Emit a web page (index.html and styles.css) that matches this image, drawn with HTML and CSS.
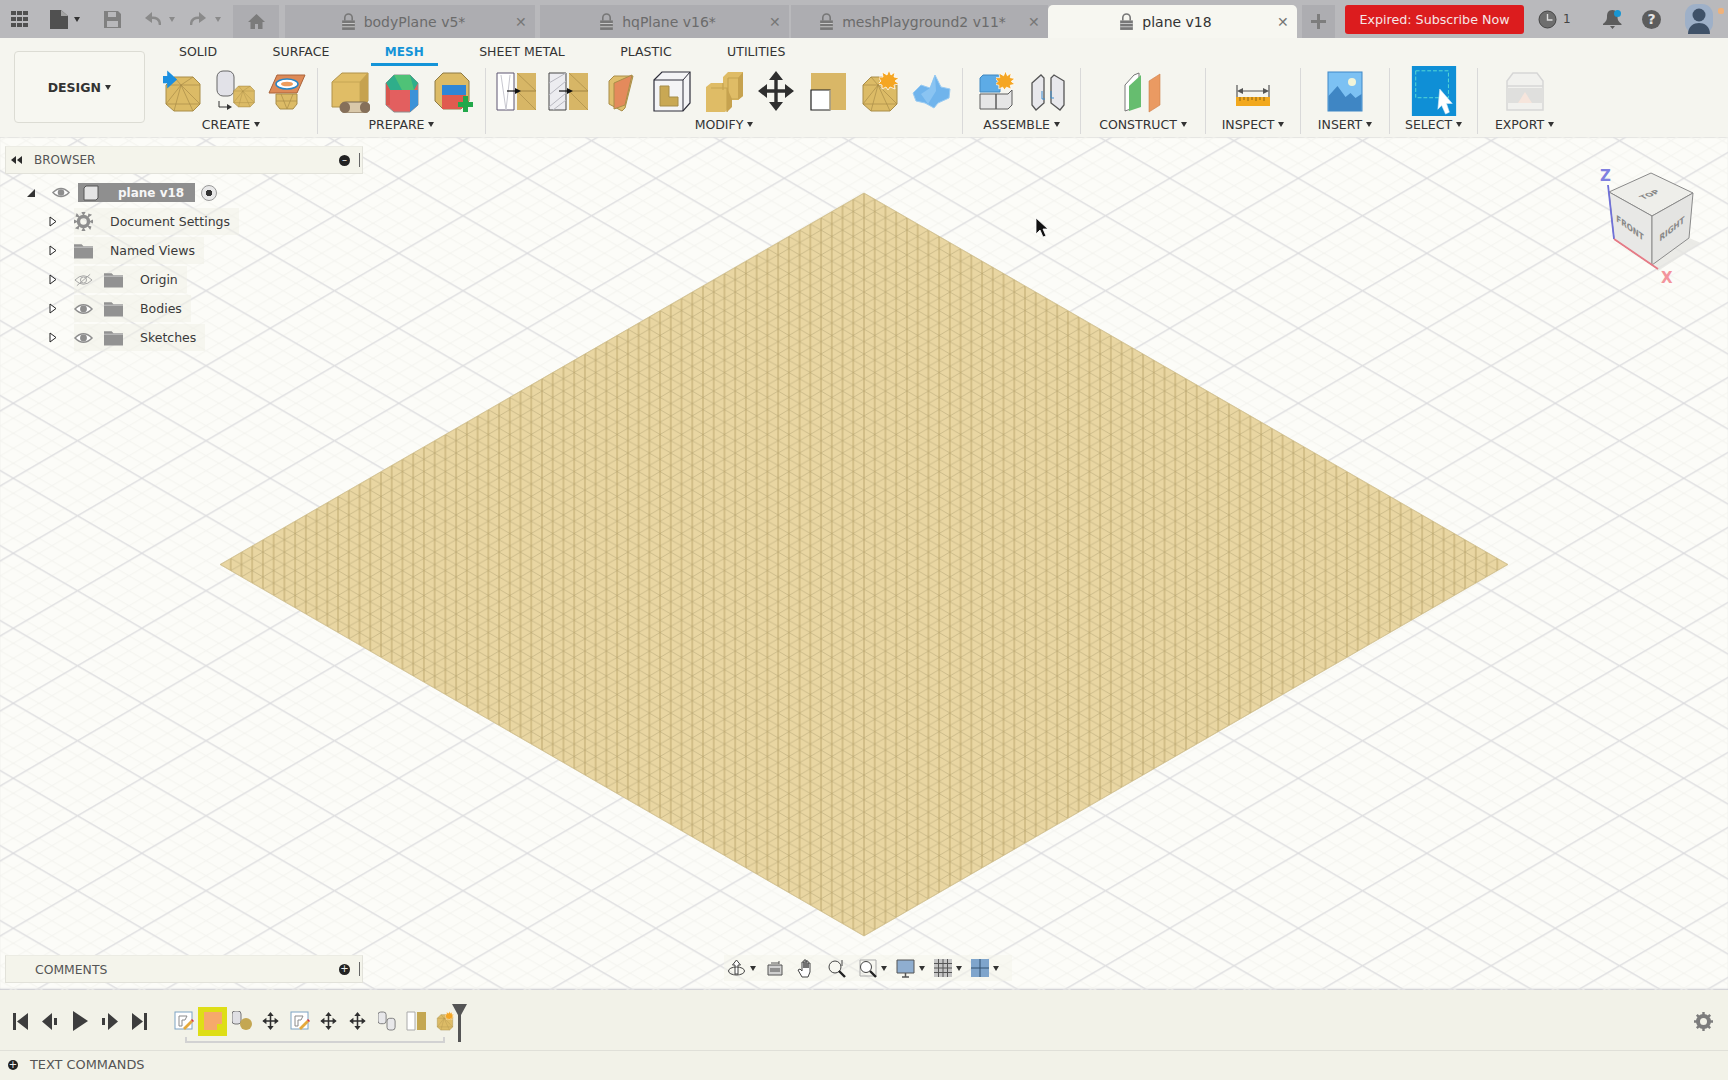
FILE: index.html
```html
<!DOCTYPE html>
<html lang="en">
<head>
  <meta charset="UTF-8" />
  <title>Autodesk Fusion 360 - plane v18</title>
  <link rel="stylesheet" href="styles.css">
</head>
<body>
  <!-- shared icon shapes -->
  <svg class="defs" width="0" height="0">
    <symbol id="hex" viewBox="0 0 40 44">
      <path d="M3 16l8-8h19l7 7v20l-7 7H11l-8-7z" fill="#dcbb66" stroke="#a98d48"/>
      <path d="M3 16h34M11 8l7 8 12-8M3 35l15-19 19 19M18 16l-7 26M18 16l12 26M3 35h34" fill="none" stroke="#a98d48" stroke-width=".7"/>
    </symbol>
    <symbol id="sun" viewBox="0 0 20 20">
      <path d="M10 0l2 5 4-3-1 5 5 1-4 3 4 3-5 1 1 4-5-2-2 3-2-3-4 2 0-4-4-1 3-3-3-4 5 0-1-5 5 3z" fill="#f5a623" stroke="#fff" stroke-width=".8"/>
    </symbol>
    <symbol id="move" viewBox="0 0 40 44">
      <path d="M20 7v30M5 22h30" stroke="#2f2f2f" stroke-width="3.4"/>
      <path d="M20 2l7 9H13zM20 42l-7-9h14zM2 22l9-7v14zM38 22l-9 7V15z" fill="#2f2f2f"/>
    </symbol>
    <symbol id="sketch" viewBox="0 0 20 20">
      <rect x="1" y="1" width="17" height="17" fill="#fff" stroke="#7da3c4"/>
      <path d="M5 5h8l-2 4H8v6H5z" fill="none" stroke="#8a8a8a"/>
      <path d="M9 17l8-8 2 2-8 8z" fill="#e5a93c"/><path d="M17 9l2 2 1-1-2-2z" fill="#d8333a"/>
    </symbol>
    <symbol id="eye" viewBox="0 0 20 14">
      <path d="M1 7q9-9 18 0q-9 9-18 0z" fill="#fff" stroke="#8e8e8e" stroke-width="1.6"/>
      <circle cx="10" cy="7" r="3.6" fill="#8e8e8e"/>
    </symbol>
    <symbol id="folder" viewBox="0 0 20 16">
      <path d="M0 1h8l2 2h10v13H0z" fill="#929292"/><path d="M0 4h20" stroke="#d8d8d8" stroke-width=".8"/>
    </symbol>
    <symbol id="lock" viewBox="0 0 14 17">
      <path d="M3.5 7V4.5a3.5 3.5 0 0 1 7 0V7" fill="none" stroke="#777" stroke-width="1.5"/>
      <path d="M1 7h12v9H1z" fill="#777"/><path d="M1 10h12M1 13h12" stroke="#c6c6c6"/>
    </symbol>
  </svg>

  <header class="titlebar">
    <div class="quick">
      <svg class="q-grid" width="17" height="16" viewBox="0 0 17 16" fill="#505050"><path d="M0 0h5v4H0zM6 0h5v4H6zM12 0h5v4h-5zM0 6h5v4H0zM6 6h5v4H6zM12 6h5v4h-5zM0 12h5v4H0zM6 12h5v4H6zM12 12h5v4h-5z"/></svg>
      <svg class="q-file" width="18" height="19" viewBox="0 0 18 19"><path d="M0 0h11l7 6v13H0z" fill="#505050"/><path d="M11 0v6h7" fill="#a4a4a4"/></svg>
      <span class="caret q-c1"></span>
      <svg class="q-save" width="17" height="17" viewBox="0 0 17 17"><path d="M0 0h14l3 3v14H0z" fill="#808080"/><path d="M4 1h8v5H4zM3 10h11v6H3z" fill="#b8b8bb"/></svg>
      <svg class="q-undo" width="16" height="14" viewBox="0 0 16 14"><path d="M15 13c0-6-4-8-10-7" fill="none" stroke="#8a8a8a" stroke-width="2.4"/><path d="M7 0v11L0 6z" fill="#8a8a8a"/></svg>
      <span class="caret caret-soft q-c2"></span>
      <svg class="q-redo" width="16" height="14" viewBox="0 0 16 14"><path d="M1 13c0-6 4-8 10-7" fill="none" stroke="#8a8a8a" stroke-width="2.4"/><path d="M9 0v11l7-5z" fill="#8a8a8a"/></svg>
      <span class="caret caret-soft q-c3"></span>
    </div>
    <div class="tab tab-home">
      <svg width="17" height="15" viewBox="0 0 17 15" fill="#7b7b7b"><path d="M8.5 0L17 8h-2.500v7H10v-5H7v5H2.500V8H0z"/></svg>
    </div>
    <div class="tab tab-1">
      <div class="tab-title"><svg width="15" height="18"><use href="#lock"/></svg><span>bodyPlane v5*</span></div>
      <span class="tab-close">✕</span>
    </div>
    <div class="tab tab-2">
      <div class="tab-title"><svg width="15" height="18"><use href="#lock"/></svg><span>hqPlane v16*</span></div>
      <span class="tab-close">✕</span>
    </div>
    <div class="tab tab-3">
      <div class="tab-title"><svg width="15" height="18"><use href="#lock"/></svg><span>meshPlayground2 v11*</span></div>
      <span class="tab-close">✕</span>
    </div>
    <div class="tab tab-active">
      <div class="tab-title"><svg width="15" height="18"><use href="#lock"/></svg><span>plane v18</span></div>
      <span class="tab-close">✕</span>
    </div>
    <div class="tab tab-new">
      <svg width="15" height="15" viewBox="0 0 15 15" fill="#7d7d7d"><path d="M6 0h3v6h6v3H9v6H6V9H0V6h6z"/></svg>
    </div>
    <button class="subscribe">Expired: Subscribe Now</button>
    <div class="status">
      <svg width="19" height="19" viewBox="0 0 19 19"><circle cx="9.500" cy="9.500" r="8.500" fill="#6e6e6e" stroke="#444"/><path d="M9.500 4v6h5" fill="none" stroke="#ddd" stroke-width="1.400"/></svg>
      <span class="job-count">1</span>
      <span class="bell">
        <svg width="19" height="21" viewBox="0 0 19 21" fill="#5c5c5c"><path d="M9.500 1c4 0 5 3 5 7 0 4 2 5 4 7v1H0v-1c2-2 4-3 4-7 0-4 1-7 5.500-7zM7 17h5l-2.500 3z"/></svg>
        <i class="bell-dot"></i>
      </span>
      <span class="help">?</span>
      <span class="avatar">
        <svg width="28" height="30" viewBox="0 0 28 30"><rect width="28" height="30" rx="11" fill="#9eb0c8"/><circle cx="14" cy="11" r="6.500" fill="#3f5168"/><path d="M3 30c0-8 6-11 11-11s11 3 11 11z" fill="#3f5168"/></svg>
      </span>
      <i class="avatar-dot"></i>
    </div>
  </header>

  <section class="ribbon">
    <button class="workspace">DESIGN <span class="caret"></span></button>
    <div class="ribbon-main">
      <nav class="ribbon-tabs">
        <span class="rtab">SOLID</span>
        <span class="rtab">SURFACE</span>
        <span class="rtab rtab-on">MESH</span>
        <span class="rtab">SHEET METAL</span>
        <span class="rtab">PLASTIC</span>
        <span class="rtab">UTILITIES</span>
      </nav>
      <div class="panels">
        <div class="panel panel-create">
          <div class="icons">
            <svg class="icon" viewBox="0 0 40 44"><use href="#hex"/><path d="M0 10h8V4l11 10-11 10v-6H0z" fill="#1c8fe0" transform="translate(-3 -2) scale(.9)"/></svg>
            <svg class="icon" viewBox="0 0 40 44"><rect x="2" y="2" width="17" height="25" rx="6" fill="#e2e2e8" stroke="#666"/><path d="M4 32v6h9" fill="none" stroke="#333"/><path d="M12 35l5 3-5 3z" fill="#333"/><svg x="18" y="12" width="22" height="31" viewBox="2 7 36 36"><use href="#hex" width="40" height="44"/></svg></svg>
            <svg class="icon" viewBox="0 0 40 44"><path d="M6 24h-4L10 6h28l-8 18z" fill="#dd8a57" stroke="#a9633a"/><ellipse cx="20" cy="15" rx="11" ry="5" fill="#fff" stroke="#2585c7" stroke-width="1.500"/><ellipse cx="20" cy="15" rx="6" ry="2.300" fill="#ef9c5c"/><path d="M9 25h21v10l-4 5H13l-4-5z" fill="#dcbb66" stroke="#a98d48"/><path d="M9 32h21M14 25l6 15 6-15" fill="none" stroke="#a98d48" stroke-width=".7"/></svg>
          </div>
          <div class="panel-label">CREATE <span class="caret"></span></div>
        </div>
        <div class="panel panel-prepare">
          <div class="icons">
            <svg class="icon" viewBox="0 0 40 44"><path d="M2 13l10-9h26v28l-8 6H2z" fill="#e0bd66" stroke="#b0924a"/><path d="M2 13h28v25M30 13l8-9" fill="none" stroke="#c6a654"/><path d="M30 13l8-9v28l-8 6z" fill="#c6a24f"/><rect x="10" y="33" width="30" height="11" rx="5.500" fill="#d9c8a9" stroke="#776650"/><rect x="10" y="33" width="10" height="11" rx="5" fill="#86705a"/><rect x="30" y="33" width="10" height="11" rx="5" fill="#86705a"/></svg>
            <svg class="icon" viewBox="0 0 40 44"><path d="M4 14l8-8h16l8 8v22l-8 7H12l-8-7z" fill="#e35f5f" stroke="#8d8d8d"/><path d="M4 14l8-8h16l8 8-4 7H8z" fill="#2fae8a"/><path d="M12 6h16l4 15H20z" fill="#4fc277"/><path d="M28 21h8v15l-8 7z" fill="#3c92d8"/><path d="M4 14l4 7v15l-4 0z" fill="#d8574f"/></svg>
            <svg class="icon" viewBox="0 0 40 44"><path d="M1 12l8-8h18l8 8v20l-8 8H9l-8-8z" fill="#dcbb66" stroke="#8e7a44"/><path d="M8 16h24v10H8z" fill="#2f86d6"/><path d="M8 26h24v10l-5 4H8z" fill="#e05b4f"/><path d="M26 35h5v-6h5v6h5v5h-5v5h-5v-5h-5z" fill="#22a84a" transform="translate(-2 -2)"/></svg>
          </div>
          <div class="panel-label">PREPARE <span class="caret"></span></div>
        </div>
        <div class="panel panel-modify">
          <div class="icons">
            <svg class="icon" viewBox="0 0 40 44"><path d="M1 4h17v37H1z" fill="#fff" stroke="#5c5470"/><path d="M5 6l5 35M14 6l-4 35" stroke="#c8c8d0" fill="none"/><path d="M21 4h19v37H21z" fill="#d7b666"/><path d="M21 4l19 18-19 0 19 19M21 22h19" stroke="#a98d48" fill="none" stroke-width=".7"/><path d="M11 22h10" stroke="#111" stroke-width="1.200"/><path d="M19 19l6 3-6 3z" fill="#111"/></svg>
            <svg class="icon" viewBox="0 0 40 44"><path d="M1 4h17v37H1z" fill="#ececf0" stroke="#444"/><path d="M1 14L18 4M1 26l17-14M1 38l17-14M5 41l13-10" stroke="#b8b8c0" fill="none"/><path d="M21 4h19v37H21z" fill="#d7b666"/><path d="M21 4l19 18-19 0 19 19M21 22h19" stroke="#a98d48" fill="none" stroke-width=".7"/><path d="M11 22h10" stroke="#111" stroke-width="1.200"/><path d="M19 19l6 3-6 3z" fill="#111"/></svg>
            <svg class="icon" viewBox="0 0 40 44"><path d="M9 12l5-5h19l-1 4-7 28-3 3-13-7z" fill="#dfbe6c" stroke="#a98d48"/><path d="M14 14l18-8-7 30-11 4z" fill="#e48a5c" stroke="#a98d48"/></svg>
            <svg class="icon" viewBox="0 0 40 44"><path d="M2 11l8-8h28v31l-7 8H2z" fill="#f4f4f6" stroke="#2e2e3a" stroke-width="1.200"/><path d="M2 11h29v31M31 11l7-8" fill="none" stroke="#2e2e3a"/><path d="M8 17h9v11h9v9H8z" fill="#c9a854" stroke="#a58c48"/></svg>
            <svg class="icon" viewBox="0 0 40 44"><path d="M2 18l5-4h12V8l5-5h15v24l-5 4h-8v7l-5 5H2z" fill="#dfbc66"/><path d="M24 9h15M19 14v7M7 19h16v24M24 9v21h10" fill="none" stroke="#c6a450" stroke-width="1.200"/><path d="M34 9l5-6v24l-5 4zM23 19l0 24 5-5v-8l-5-11z" fill="#c6a24f"/></svg>
            <svg class="icon" viewBox="0 0 40 44"><use href="#move"/></svg>
            <svg class="icon" viewBox="0 0 40 44"><path d="M3 4h35v37H3z" fill="#d9b767"/><path d="M3 21h19v20H3z" fill="#fff" stroke="#222" stroke-width="1.200"/><path d="M22 21v20" stroke="#f2e4bd"/></svg>
            <svg class="icon" viewBox="0 0 40 44"><use href="#hex"/><use href="#sun" x="19" y="1" width="20" height="20"/></svg>
            <svg class="icon" viewBox="0 0 40 44"><path d="M1 24l8-8 9 3 5-13 6 12 9 2-1 9-11 5-4 5-9-5-9-2z" fill="#70b4ec" stroke="#9acbf2"/><path d="M18 19l5-13 1 16-8 13-7-10z" fill="#8ac4f2"/></svg>
          </div>
          <div class="panel-label">MODIFY <span class="caret"></span></div>
        </div>
        <div class="panel panel-assemble">
          <div class="icons">
            <svg class="icon" viewBox="0 0 40 44"><path d="M4 9l3-3h17v17H4z" fill="#5dabe6" stroke="#4088c0"/><path d="M4 25h16v15H4zM20 25h12l4-4v15l-4 4H20z" fill="#e6e6e6" stroke="#5c5c5c"/><use href="#sun" x="20" y="2" width="19" height="19"/></svg>
            <svg class="icon" viewBox="0 0 40 44"><path d="M4 14l9-8 3 3v25l-8 7-4-5z" fill="#e8e8ec" stroke="#555" stroke-width="1.300"/><path d="M36 12l-10-6-3 3v25l9 7 4-5z" fill="#e8e8ec" stroke="#555" stroke-width="1.300"/><path d="M14 22v8h3M23 22v7h3" fill="none" stroke="#3f8fd0"/></svg>
          </div>
          <div class="panel-label">ASSEMBLE <span class="caret"></span></div>
        </div>
        <div class="panel panel-construct">
          <div class="icons">
            <svg class="icon" viewBox="0 0 40 44"><path d="M2 16l9-10 5-2v33l-14 5z" fill="#fff" stroke="#777"/><path d="M6 17l12-11v32l-12 4z" fill="#66bd6f"/><path d="M26 12l11-7v31l-11 7z" fill="#ea9a62" stroke="#cf7f4b" stroke-width=".6"/></svg>
          </div>
          <div class="panel-label">CONSTRUCT <span class="caret"></span></div>
        </div>
        <div class="panel panel-inspect">
          <div class="icons">
            <svg class="icon" viewBox="0 0 40 44"><path d="M4 16v14M36 16v14M6 22h28" fill="none" stroke="#555" stroke-width="1.200"/><path d="M4 22l6-3v6zM36 22l-6-3v6z" fill="#555"/><rect x="3" y="28" width="34" height="9" fill="#f2a81d"/><path d="M7 28v4M11 28v3M15 28v4M19 28v3M23 28v4M27 28v3M31 28v4" stroke="#8a6414"/></svg>
          </div>
          <div class="panel-label">INSPECT <span class="caret"></span></div>
        </div>
        <div class="panel panel-insert">
          <div class="icons">
            <svg class="icon" viewBox="0 0 40 44"><rect x="3" y="3" width="34" height="39" fill="#7cc1f3" stroke="#3f88c8"/><circle cx="27" cy="13" r="4" fill="#f1f4d8"/><path d="M3.500 36V27l9-10 8 11 5-4 5 5 6-4v17H3.500z" fill="#3f86c4"/></svg>
          </div>
          <div class="panel-label">INSERT <span class="caret"></span></div>
        </div>
        <div class="panel panel-select">
          <div class="icons">
            <svg class="icon icon-select" viewBox="0 0 46 52"><rect width="46" height="52" fill="#0f8fd6"/><rect x="4" y="5" width="34" height="28" fill="none" stroke="#58dcd4" stroke-dasharray="4 2"/><path d="M29 24l13 15-6 0 3 9-4 2-4-9-4 4z" fill="#fff" stroke="#cfe9f7" stroke-width=".6"/></svg>
          </div>
          <div class="panel-label">SELECT <span class="caret"></span></div>
        </div>
        <div class="panel panel-export">
          <div class="icons">
            <svg class="icon" viewBox="0 0 40 44"><path d="M8 4h24l6 8v29H2V12z" fill="#f1f1ee" stroke="#d6d6d6" stroke-width="1.500"/><path d="M2 17h36" stroke="#d6d6d6" stroke-width="1.500"/><path d="M2 19h36v15H2z" fill="#dfdfdd"/><path d="M13 34l7-11 7 11z" fill="#f6e5dc"/></svg>
          </div>
          <div class="panel-label">EXPORT <span class="caret"></span></div>
        </div>
      </div>
    </div>
  </section>

  <main class="canvas">
    <svg class="scene" width="1728" height="853" viewBox="0 0 1728 853">
      <defs>
        <pattern id="gridMinor" width="25.7" height="15" patternUnits="userSpaceOnUse" patternTransform="translate(1298.3 41.3)">
          <path d="M0 0L25.700 15M25.700 0L0 15" stroke="#f3f3ee" stroke-width="1"/>
        </pattern>
        <pattern id="gridMajor" width="128.5" height="75" patternUnits="userSpaceOnUse" patternTransform="translate(1298.3 41.3)">
          <path d="M0 0L128.500 75M128.500 0L0 75" stroke="#dcdcdf" stroke-width="1.100"/>
        </pattern>
        <pattern id="meshCells" width="21.467" height="12.383" patternUnits="userSpaceOnUse" patternTransform="translate(864 56)">
          <path d="M0 0L21.467 12.383M21.467 0L0 12.383" stroke="#bfae7e" stroke-width=".7"/>
          <path d="M0 0V12.383M10.733 0V12.383M21.467 0V12.383" stroke="#b29c60" stroke-width=".8"/>
        </pattern>
      </defs>
      <rect width="1728" height="853" fill="url(#gridMinor)"/>
      <rect width="1728" height="853" fill="url(#gridMajor)"/>
      <polygon points="864,56 1508,427.500 864,799 220,427.500" fill="#e9d6a2"/>
      <polygon points="864,56 1508,427.500 864,799 220,427.500" fill="url(#meshCells)" stroke="#d2c193" stroke-width=".8"/>
    </svg>

    <aside class="browser">
      <div class="pane-head">
        <svg class="pane-back" width="11" height="8" viewBox="0 0 11 8" fill="#2b2b2b"><path d="M5 0v8L0 4zM11 0v8L6 4z"/></svg>
        <span class="pane-title">BROWSER</span>
        <span class="pane-toggle">–</span>
        <span class="pane-grip"></span>
      </div>
      <ul class="tree">
        <li class="tree-row tree-root">
          <svg class="twist-open" width="8" height="8" viewBox="0 0 8 8"><path d="M8 0v8H0z" fill="#333"/></svg>
          <svg class="eye-root" width="18" height="13"><use href="#eye"/></svg>
          <span class="root-label">
            <svg width="16" height="16" viewBox="0 0 16 16"><path d="M1 3l2-2h12v12l-2 2H1z" fill="#e4e4e4" stroke="#555"/></svg>
            plane v18
          </span>
          <span class="radio"></span>
        </li>
        <li class="tree-row">
          <svg class="twist" width="8" height="11" viewBox="0 0 8 11"><path d="M1 1l6 4.500L1 10z" fill="#fff" stroke="#222"/></svg>
          <span class="node">
            <svg width="19" height="19" viewBox="0 0 19 19"><path d="M9.500 2.500l1-2h-2zM9.500 16.500l1 2h-2zM2.500 9.500l-2 1v-2zM16.500 9.500l2 1v-2zM4.500 4.500l-2-.5.500-1.500zM14.500 14.500l2 .5-.5 1.500zM14.500 4.500l.5-2 1.500.5zM4.500 14.500l-.5 2-1.500-.5z" fill="#8e8e8e" stroke="#8e8e8e" stroke-width="1.500"/><circle cx="9.500" cy="9.500" r="5" fill="none" stroke="#8e8e8e" stroke-width="3.400"/></svg>
            <span class="node-text">Document Settings</span>
          </span>
        </li>
        <li class="tree-row">
          <svg class="twist" width="8" height="11" viewBox="0 0 8 11"><path d="M1 1l6 4.500L1 10z" fill="#fff" stroke="#222"/></svg>
          <span class="node">
            <svg width="19" height="16"><use href="#folder"/></svg>
            <span class="node-text">Named Views</span>
          </span>
        </li>
        <li class="tree-row">
          <svg class="twist" width="8" height="11" viewBox="0 0 8 11"><path d="M1 1l6 4.500L1 10z" fill="#fff" stroke="#222"/></svg>
          <span class="node">
            <svg width="19" height="14" viewBox="0 0 20 14"><path d="M1 7q9-9 18 0q-9 9-18 0z" fill="none" stroke="#a2a2a2"/><circle cx="10" cy="7" r="3.200" fill="none" stroke="#a2a2a2"/><path d="M3 13L17 1" stroke="#a2a2a2"/></svg>
            <svg class="node-folder" width="19" height="16"><use href="#folder"/></svg>
            <span class="node-text">Origin</span>
          </span>
        </li>
        <li class="tree-row">
          <svg class="twist" width="8" height="11" viewBox="0 0 8 11"><path d="M1 1l6 4.500L1 10z" fill="#fff" stroke="#222"/></svg>
          <span class="node">
            <svg width="19" height="14"><use href="#eye"/></svg>
            <svg class="node-folder" width="19" height="16"><use href="#folder"/></svg>
            <span class="node-text">Bodies</span>
          </span>
        </li>
        <li class="tree-row">
          <svg class="twist" width="8" height="11" viewBox="0 0 8 11"><path d="M1 1l6 4.500L1 10z" fill="#fff" stroke="#222"/></svg>
          <span class="node">
            <svg width="19" height="14"><use href="#eye"/></svg>
            <svg class="node-folder" width="19" height="16"><use href="#folder"/></svg>
            <span class="node-text">Sketches</span>
          </span>
        </li>
      </ul>
    </aside>

    <svg class="viewcube" width="120" height="120" viewBox="0 0 120 120">
      <path d="M89 73l12 5-43 28-6-6z" fill="#e6e6e2" opacity=".8"/>
      <path d="M51 8L9 27l43 24 41-23z" fill="#eeeeea" stroke="#8a8a8a"/>
      <path d="M9 27l5 47 38 26V51z" fill="#e8e8e6" stroke="#8a8a8a"/>
      <path d="M93 28l-4 45-37 27V51z" fill="#e4e4e2" stroke="#8a8a8a"/>
      <path d="M8 20l6 54" stroke="#6f70d8" stroke-width="1.800"/>
      <path d="M14 74l44 30" stroke="#e77a86" stroke-width="1.800"/>
      <text class="cube-z" x="0" y="16">Z</text>
      <text class="cube-x" x="61" y="118">X</text>
      <text class="cube-face" transform="matrix(.85 -.35 .75 .45 52 31)">TOP</text>
      <text class="cube-face" transform="matrix(.8 .58 0 1 30 66)">FRONT</text>
      <text class="cube-face" transform="matrix(.8 -.62 0 1 72 67)">RIGHT</text>
    </svg>

    <svg class="pointer" width="13" height="21" viewBox="0 0 13 21"><path d="M1 1v16l4-4 3 7 3-1-3-7h5z" fill="#111" stroke="#fff" stroke-width=".8"/></svg>

    <div class="comments">
      <span class="pane-title">COMMENTS</span>
      <span class="pane-toggle">+</span>
      <span class="pane-grip"></span>
    </div>

    <div class="navbar">
      <svg width="19" height="19" viewBox="0 0 19 19" fill="none" stroke="#444"><path d="M9.500 1l-4 5h2.500v9h3V6H13.500z" fill="#fff"/><ellipse cx="9.500" cy="12" rx="8" ry="4"/></svg><span class="caret"></span>
      <svg class="nav-gap nav-first" width="18" height="18" viewBox="0 0 18 18"><path d="M2 6h14v10H2z" fill="#cfcfcf" stroke="#555"/><path d="M4 9h10v4H4z" fill="#8f8f8f"/><path d="M5 4h8M13 2v3" stroke="#555"/></svg>
      <svg class="nav-gap" width="18" height="19" viewBox="0 0 18 19"><path d="M5 18l-4-7 2-1 2 2V3h2v6V1h2v8V2h2v7V4h2v9l-2 5z" fill="#fff" stroke="#444"/></svg>
      <svg class="nav-gap" width="18" height="19" viewBox="0 0 18 19" fill="none" stroke="#444"><circle cx="7" cy="8" r="6"/><path d="M11 12l6 6" stroke-width="2.400" stroke="#222"/><path d="M14 1v6"/></svg>
      <svg class="nav-gap" width="18" height="19" viewBox="0 0 18 19" fill="none"><path d="M1 1h16v16H1z" stroke="#aaa"/><circle cx="7" cy="8" r="5.500" stroke="#444" fill="#fff"/><path d="M11 12l6 6" stroke-width="2.400" stroke="#222"/></svg><span class="caret"></span>
      <svg class="nav-gap-s" width="19" height="19" viewBox="0 0 19 19"><path d="M1 1h17v13H1z" fill="#8faed0" stroke="#555"/><path d="M6 18h7M9.500 14v4" stroke="#555" stroke-width="1.500"/></svg><span class="caret"></span>
      <svg class="nav-gap-s" width="18" height="18" viewBox="0 0 18 18"><path d="M0 0h18v18H0z" fill="#c5c5c5"/><path d="M0 4.500h18M0 9h18M0 13.500h18M4.500 0v18M9 0v18M13.500 0v18" stroke="#555"/></svg><span class="caret"></span>
      <svg class="nav-gap-s" width="18" height="18" viewBox="0 0 18 18"><path d="M0 0h18v18H0z" fill="#7fa5cc"/><path d="M9 0v18M0 9h18" stroke="#33506e"/></svg><span class="caret"></span>
    </div>
  </main>

  <section class="timeline">
    <div class="transport">
      <svg width="15" height="17" viewBox="0 0 15 17" fill="#3d3d3d"><path d="M0 0h3v17H0zM15 0v17L4 8.500z"/></svg>
      <svg width="16" height="17" viewBox="0 0 16 17" fill="#3d3d3d"><path d="M10 0v17L0 8.500zM12 5h3v7h-3z"/></svg>
      <svg width="15" height="20" viewBox="0 0 15 20" fill="#3d3d3d"><path d="M0 0l15 10L0 20z"/></svg>
      <svg width="16" height="17" viewBox="0 0 16 17" fill="#3d3d3d"><path d="M6 0v17l10-8.500zM0 5h3v7H0z"/></svg>
      <svg width="15" height="17" viewBox="0 0 15 17" fill="#3d3d3d"><path d="M0 0v17l11-8.500zM12 0h3v17h-3z"/></svg>
    </div>
    <div class="features">
      <span class="feature"><svg width="20" height="20"><use href="#sketch"/></svg></span>
      <span class="feature feature-on"><svg width="22" height="22" viewBox="0 0 22 22"><path d="M2 2h18v12h-5v6H2z" fill="#f6a96b"/></svg></span>
      <span class="feature"><svg width="20" height="20" viewBox="0 0 20 20"><rect x="0" y="0" width="9" height="13" rx="3" fill="#e0e0e4" stroke="#777"/><circle cx="14" cy="13" r="6" fill="#c4a752"/></svg></span>
      <span class="feature"><svg width="19" height="20"><use href="#move"/></svg></span>
      <span class="feature"><svg width="20" height="20"><use href="#sketch"/></svg></span>
      <span class="feature"><svg width="19" height="20"><use href="#move"/></svg></span>
      <span class="feature"><svg width="19" height="20"><use href="#move"/></svg></span>
      <span class="feature"><svg width="18" height="20" viewBox="0 0 20 20"><rect x="0" y="0" width="9" height="13" rx="3" fill="#e8e8ea" stroke="#777"/><rect x="10" y="7" width="9" height="13" rx="3" fill="#e8e8ea" stroke="#777"/></svg></span>
      <span class="feature"><svg width="20" height="20" viewBox="0 0 20 20"><path d="M1 1h8v18H1z" fill="#fff" stroke="#aaa"/><path d="M11 1h9v18h-9z" fill="#c4a752"/></svg></span>
      <span class="feature"><svg width="20" height="20" viewBox="0 0 40 44"><use href="#hex"/><use href="#sun" x="20" y="0" width="20" height="20"/></svg></span>
      <span class="feature-rail"></span>
      <svg class="marker" width="15" height="38" viewBox="0 0 15 38"><path d="M0 0h15l-6 11v27H6V11z" fill="#555"/></svg>
    </div>
    <svg class="settings" width="19" height="19" viewBox="0 0 19 19"><circle cx="9.500" cy="9.500" r="5.500" fill="none" stroke="#7d7d7d" stroke-width="4"/><path d="M9.500 0v19M0 9.500h19M2.800 2.800l13.400 13.400M16.200 2.800L2.800 16.200" stroke="#7d7d7d" stroke-width="2.400" stroke-dasharray="3 13"/></svg>
  </section>

  <footer class="textbar">
    <span class="pane-toggle pane-toggle-dark">+</span>
    <span class="pane-title">TEXT COMMANDS</span>
  </footer>
</body>
</html>
```

FILE: styles.css
```css
* { box-sizing: border-box; }
html, body { margin: 0; padding: 0; }
body { width: 1728px; height: 1080px; overflow: hidden; display: flex; flex-direction: column; background: #f4f4ee; color: #333; font-family: "DejaVu Sans", "Open Sans", sans-serif; font-size: 12px; }
svg { display: block; flex: none; }
.defs { position: absolute; }
ul { list-style: none; margin: 0; padding: 0; }

.caret { display: inline-block; width: 0; height: 0; border-left: 3.5px solid transparent; border-right: 3.5px solid transparent; border-top: 5px solid #333; vertical-align: 2px; }
.caret-soft { border-top-color: #8a8a8a; }

/* title bar */
.titlebar { height: 38px; flex: none; display: flex; align-items: flex-end; background: #b9b9bc; }
.quick { width: 233px; height: 38px; flex: none; display: flex; align-items: center; }
.q-grid { margin-left: 11px; }
.q-file { margin-left: 22px; }
.q-c1 { margin-left: 6px; }
.q-save { margin-left: 24px; }
.q-undo { margin-left: 24px; }
.q-c2 { margin-left: 8px; }
.q-redo { margin-left: 15px; }
.q-c3 { margin-left: 9px; }
.tab { height: 33px; flex: none; display: flex; align-items: center; background: #adadb1; color: #6b6b6b; font-size: 14px; }
.tab-home { width: 46px; justify-content: center; }
.tab-1 { width: 250px; margin-left: 6px; }
.tab-2 { width: 249px; margin-left: 5px; }
.tab-3 { width: 257px; margin-left: 2px; }
.tab-active { width: 249px; background: #f7f7f1; color: #333; border-radius: 5px 5px 0 0; }
.tab-new { width: 33px; margin-left: 5px; justify-content: center; }
.tab-title { flex: 1; padding-left: 6px; display: flex; justify-content: center; align-items: center; gap: 8px; white-space: nowrap; }
.tab-close { width: 12px; margin-right: 8px; font-size: 14px; line-height: 1; color: #777; }
.subscribe { width: 179px; height: 29px; margin: 0 0 4px 10px; flex: none; border: none; border-radius: 3px; background: #dc1c1e; color: #f6e6e6; font-family: inherit; font-size: 12.7px; padding: 0; }
.status { height: 38px; flex: 1; display: flex; align-items: center; position: relative; padding-left: 14px; }
.job-count { margin-left: 6px; width: 8px; color: #444; }
.bell { margin-left: 32px; position: relative; }
.bell-dot { position: absolute; top: 1px; left: 11px; width: 7px; height: 7px; border-radius: 50%; background: #1896d2; }
.help { margin-left: 20px; width: 19px; height: 19px; border-radius: 50%; background: #5c5c5c; color: #e4e4e4; text-align: center; font-size: 14px; line-height: 19px; font-weight: bold; }
.avatar { margin-left: 24px; }
.avatar-dot { position: absolute; top: 8px; left: 194px; width: 6px; height: 6px; background: #f0b27a; border-radius: 2px; }

/* ribbon */
.ribbon { height: 99px; flex: none; display: flex; background: #f5f5ef; }
.workspace { width: 131px; height: 72px; margin: 13px 0 0 14px; flex: none; border: 1px solid #dcdcd4; border-radius: 4px; background: #f7f7f1; color: #333; font-family: inherit; font-size: 12.5px; font-weight: bold; padding: 0; }
.ribbon-main { flex: 1; }
.ribbon-tabs { height: 28px; display: flex; gap: 27.5px; padding-left: 20px; }
.rtab { height: 28px; padding: 7px 14px 0; line-height: 14px; font-size: 12.5px; white-space: nowrap; border-bottom: 3px solid transparent; color: #333; }
.rtab-on { color: #1494d8; font-size: 12px; font-weight: bold; border-bottom-color: #1494d8; }
.panels { height: 71px; display: flex; }
.panel { height: 66px; margin-top: 2px; flex: none; display: flex; flex-direction: column; align-items: center; border-right: 1px solid #d9d9d9; }
.panel-create { width: 173px; }
.panel-create .icons { padding-left: 8px; }
.panel-prepare { width: 168px; }
.panel-modify { width: 477px; }
.panel-assemble { width: 118px; }
.panel-construct { width: 125px; }
.panel-inspect { width: 95px; }
.panel-insert { width: 89px; }
.panel-select { width: 88px; }
.panel-export { width: 93px; border-right: none; }
.icons { height: 46px; flex: none; display: flex; gap: 12px; align-items: center; }
.icon { width: 40px; height: 44px; }
.icon-select { width: 46px; height: 50px; }
.panel-label { line-height: 22px; font-size: 12.5px; white-space: nowrap; color: #333; }

/* canvas */
.canvas { flex: 1; position: relative; background: #fcfcf8; box-shadow: inset 0 -2px 2px -1px #c6c6cc, inset 0 1px 1px #e4e4e0; overflow: hidden; }
.scene { position: absolute; top: 0; left: 0; }
.browser { position: absolute; top: 9px; left: 5px; width: 358px; }
.pane-head, .comments { height: 28px; display: flex; align-items: center; background: #f4f4eb; border: 1px solid #e2e2da; border-top-color: #ecece4; }
.pane-back { margin-left: 5px; }
.pane-title { color: #555; font-size: 12px; }
.pane-back + .pane-title { margin-left: 12px; }
.comments .pane-title { font-size: 12.4px; }
.pane-toggle { width: 11px; height: 11px; flex: none; margin-left: auto; border-radius: 50%; background: #222; color: #eee; font-size: 10px; line-height: 10px; text-align: center; }
.pane-grip { width: 1px; height: 14px; margin: 0 2px 0 9px; background: #666; }
.tree { padding-top: 4px; }
.tree-row { height: 29px; display: flex; align-items: center; padding-left: 44px; }
.tree-root { padding-left: 22px; }
.twist-open { margin-right: 17px; }
.eye-root { margin-right: 8px; }
.root-label { width: 117px; height: 19px; display: flex; align-items: center; gap: 19px; padding-left: 5px; background: #8f8f8f; color: #f6f6f6; font-weight: bold; font-size: 12px; white-space: nowrap; }
.radio { width: 16px; height: 16px; margin-left: 6px; border-radius: 50%; border: 1px solid #999; background: radial-gradient(circle, #333 3px, #e8e8e8 3.5px); }
.twist { margin-right: 17px; }
.node { height: 27px; display: flex; align-items: center; padding-right: 9px; background: rgba(240, 240, 230, 0.5); }
.node-folder { margin-left: 11px; }
.node-text { margin-left: 17px; color: #3a3a3a; font-size: 12.5px; white-space: nowrap; }
.viewcube { position: absolute; top: 28px; left: 1600px; overflow: visible; }
.cube-z, .cube-x { font-size: 15px; font-weight: bold; }
.cube-z { fill: #7f80e0; }
.cube-x { fill: #f3949c; }
.cube-face { font-size: 9px; font-weight: bold; fill: #888; text-anchor: middle; }
.pointer { position: absolute; top: 80px; left: 1035px; }
.comments { position: absolute; top: 818px; left: 5px; width: 358px; padding-left: 29px; }
.navbar { position: absolute; top: 818px; left: 724px; height: 26px; width: 288px; display: flex; align-items: center; gap: 5px; padding-left: 3px; background: rgba(243, 243, 234, 0.5); }
.navbar .caret { margin-left: -1px; }
.nav-gap { margin-left: 8px; }
.nav-first { margin-left: 5px; }
.nav-gap-s { margin-left: 4px; }

/* timeline */
.timeline { height: 60px; flex: none; display: flex; align-items: center; position: relative; padding-top: 2px; background: #f2f2e8; }
.transport { width: 134px; margin-left: 13px; display: flex; align-items: center; justify-content: space-between; }
.features { margin-left: 22px; display: flex; align-items: center; position: relative; }
.feature { width: 29px; height: 29px; display: flex; align-items: center; justify-content: center; }
.feature-on { background: #dede16; }
.feature-rail { position: absolute; left: 16px; top: 30px; width: 260px; height: 6px; border: 2px solid #d2d2d2; border-top: none; }
.marker { position: absolute; left: 283px; top: -3px; }
.settings { position: absolute; right: 15px; top: 22px; }

.textbar { height: 30px; flex: none; display: flex; align-items: center; gap: 12px; padding: 0 0 2px 8px; background: #f2f2e8; border-top: 1px solid #e0e0d8; }
.textbar .pane-title { font-size: 12.9px; }
.pane-toggle-dark { margin-left: 0; width: 10px; height: 10px; }
```
